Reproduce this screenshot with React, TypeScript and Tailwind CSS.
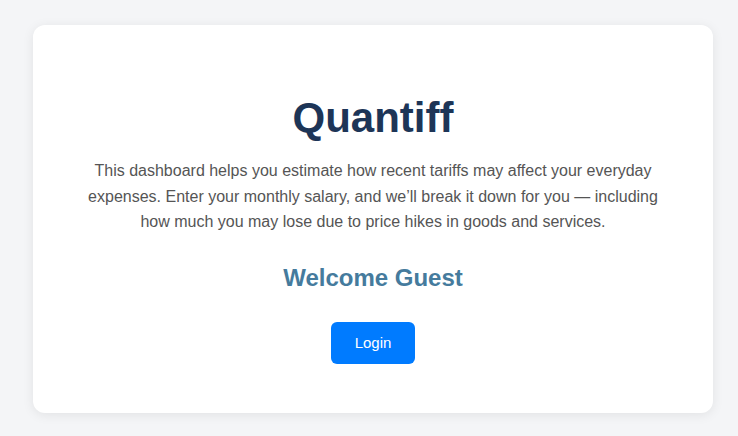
import React from 'react';

const App: React.FC = () => {
  return (
    <div className="min-h-screen bg-[#f4f5f7] px-[33px] pt-[25px] pb-[23px] font-['Liberation_Sans',Arial,sans-serif]">
      <div className="w-[680px] bg-white rounded-xl shadow-[0_2px_12px_rgba(0,0,0,0.08)] p-10 flex flex-col items-center text-center">
        <h1 className="mt-[29px] text-[42px] leading-[48px] font-bold text-[#1d3557]">Quantiff</h1>

        <p className="mt-4 text-base leading-[25.6px] text-[#555555]">
          This dashboard helps you estimate how recent tariffs may affect your everyday expenses. Enter your monthly
          salary, and we’ll break it down for you — including how much you may lose due to price hikes in goods and
          services.
        </p>

        <h2 className="mt-[29px] text-2xl leading-[28px] font-bold text-[#457b9d]">Welcome Guest</h2>

        <button className="mt-[30px] mb-[9px] w-[84px] bg-[#007bff] text-white text-[15px] leading-[18px] py-3 rounded-md">
          Login
        </button>
      </div>
    </div>
  );
};

export default App;
